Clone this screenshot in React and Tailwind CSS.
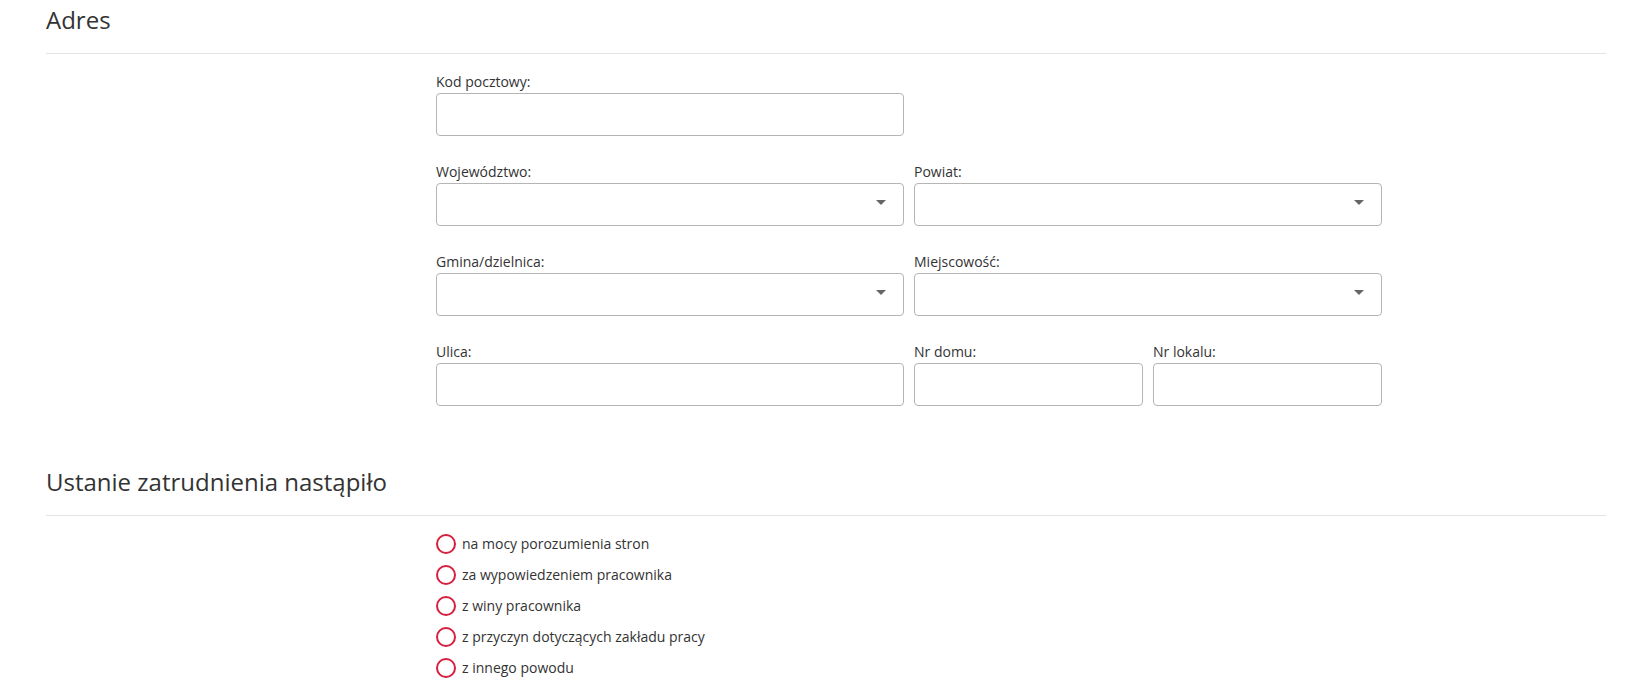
import React from "react";

function Field({ label, select, className = "" }) {
  return (
    <div className={className}>
      <div className="h-5 text-[14px] leading-5 text-[#333]">{label}</div>
      <div className="relative mt-px h-[43px] rounded-[4px] border border-[#b5b5b5] bg-white">
        {select && (
          <span className="absolute right-[17px] top-[16px] h-0 w-0 border-x-[5px] border-t-[5px] border-x-transparent border-t-[#666]" />
        )}
      </div>
    </div>
  );
}

function Section({ title, children, top }) {
  return (
    <section className={top}>
      <h2 className="border-b border-[#e3e3e3] pb-[17px] text-[24px] leading-8 text-[#333]">{title}</h2>
      {children}
    </section>
  );
}

const reasons = [
  "na mocy porozumienia stron",
  "za wypowiedzeniem pracownika",
  "z winy pracownika",
  "z przyczyn dotyczących zakładu pracy",
  "z innego powodu",
];

export default function App() {
  return (
    <div className="min-h-[697px] bg-white pl-[46px] pr-[21px] pt-1 font-['Open_Sans',sans-serif]">
      <Section title="Adres">
        <div className="ml-[390px] mt-[18px] flex w-[946px] flex-col gap-[26px]">
          <div className="grid grid-cols-[468px_468px] gap-x-[10px]">
            <Field label="Kod pocztowy:" />
          </div>
          <div className="grid grid-cols-[468px_468px] gap-x-[10px]">
            <Field label="Województwo:" select />
            <Field label="Powiat:" select />
          </div>
          <div className="grid grid-cols-[468px_468px] gap-x-[10px]">
            <Field label="Gmina/dzielnica:" select />
            <Field label="Miejscowość:" select />
          </div>
          <div className="grid grid-cols-[468px_229px_229px] gap-x-[10px]">
            <Field label="Ulica:" />
            <Field label="Nr domu:" />
            <Field label="Nr lokalu:" />
          </div>
        </div>
      </Section>
      <Section title="Ustanie zatrudnienia nastąpiło" top="mt-[60px]">
        <div className="ml-[390px] mt-[18px] flex flex-col gap-[11px]">
          {reasons.map((r) => (
            <label key={r} className="flex h-5 items-center gap-[6px] text-[14px] leading-5 text-[#333]">
              <span className="h-5 w-5 rounded-full border-2 border-[#d5203f]" />
              {r}
            </label>
          ))}
        </div>
      </Section>
    </div>
  );
}
